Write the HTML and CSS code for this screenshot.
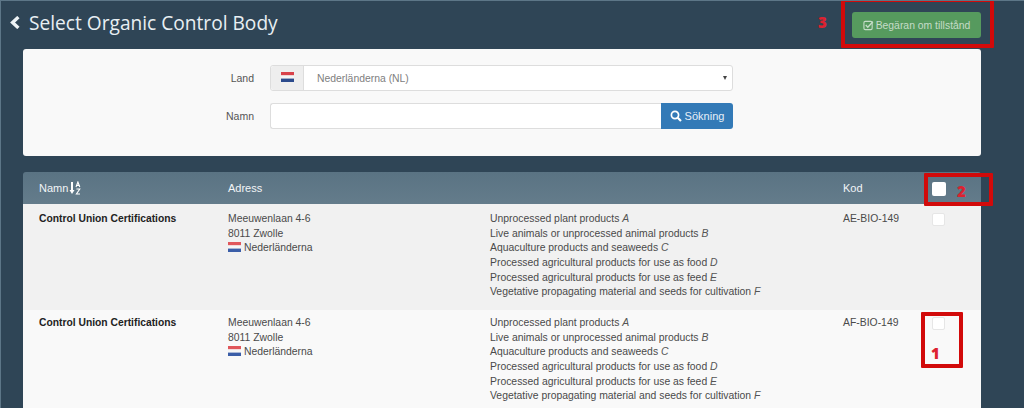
FILE: index.html
```html
<!DOCTYPE html>
<html lang="sv">
<head>
<meta charset="utf-8">
<title>Select Organic Control Body</title>
<link rel="stylesheet" href="styles.css">
</head>
<body>
<div class="page">
  <header class="topbar">
    <h1 class="title">
      <svg class="back" viewBox="0 0 10 13" width="10" height="13"><path d="M8.4 1.1 2.6 6.5l5.8 5.4" fill="none" stroke="#eef3f6" stroke-width="3.4"/></svg>
      Select Organic Control Body
    </h1>
    <button class="request" type="button">
      <svg viewBox="0 0 12 12" width="11" height="11"><rect x="1" y="1.5" width="9" height="9" rx="1.5" fill="none" stroke="currentColor" stroke-width="1.2"/><path d="M3 5.5 5.2 7.8 10.8 2" fill="none" stroke="currentColor" stroke-width="1.5"/></svg>
      Begäran om tillstånd
    </button>
  </header>

  <section class="filters">
    <div class="field">
      <span class="label">Land</span>
      <div class="select">
        <span class="addon">
          <svg class="flag" viewBox="0 0 13 10" width="13" height="10"><rect width="13" height="3.4" fill="#d8424a"/><rect y="3.4" width="13" height="3.2" fill="#f4f4f4"/><rect y="6.6" width="13" height="3.4" fill="#2b4a8c"/></svg>
        </span>
        <span class="value">Nederländerna (NL)</span>
        <span class="caret"></span>
      </div>
    </div>
    <div class="field">
      <span class="label">Namn</span>
      <div class="search">
        <input class="input" type="text" aria-label="Namn">
        <button class="search-btn" type="button">
          <svg viewBox="0 0 12 12" width="12" height="12"><circle cx="5" cy="5" r="3.6" fill="none" stroke="#fff" stroke-width="1.7"/><path d="M7.7 7.7 11 11" stroke="#fff" stroke-width="2.2"/></svg>
          Sökning
        </button>
      </div>
    </div>
  </section>

  <section class="table">
    <div class="row head">
      <div class="sort">Namn<svg viewBox="0 0 12 14" width="12" height="14"><path d="M3 1v9" stroke="#fff" stroke-width="2"/><path d="M.5 9h5L3 13z" fill="#fff"/><path d="M7 6 8.9 1 10.8 6M7.8 4.4h2.2M7.4 8h3.4L7.4 13h3.6" fill="none" stroke="#fff" stroke-width="1.1"/></svg></div>
      <div>Adress</div>
      <div></div>
      <div>Kod</div>
      <div><span class="check solid"></span></div>
    </div>
    <div class="row item shaded">
      <div class="name">Control Union Certifications</div>
      <div class="lines">Meeuwenlaan 4-6<br>8011 Zwolle<br><svg class="flag mini" viewBox="0 0 13 10" width="13" height="10"><rect width="13" height="3.4" fill="#e0575c"/><rect y="3.4" width="13" height="3.2" fill="#f6f6f6"/><rect y="6.6" width="13" height="3.4" fill="#3b5ea8"/></svg> Nederländerna</div>
      <div class="lines">Unprocessed plant products <i>A</i><br>Live animals or unprocessed animal products <i>B</i><br>Aquaculture products and seaweeds <i>C</i><br>Processed agricultural products for use as food <i>D</i><br>Processed agricultural products for use as feed <i>E</i><br>Vegetative propagating material and seeds for cultivation <i>F</i></div>
      <div class="lines">AE-BIO-149</div>
      <div><span class="check"></span></div>
    </div>
    <div class="row item plain">
      <div class="name">Control Union Certifications</div>
      <div class="lines">Meeuwenlaan 4-6<br>8011 Zwolle<br><svg class="flag mini" viewBox="0 0 13 10" width="13" height="10"><rect width="13" height="3.4" fill="#e0575c"/><rect y="3.4" width="13" height="3.2" fill="#f6f6f6"/><rect y="6.6" width="13" height="3.4" fill="#3b5ea8"/></svg> Nederländerna</div>
      <div class="lines">Unprocessed plant products <i>A</i><br>Live animals or unprocessed animal products <i>B</i><br>Aquaculture products and seaweeds <i>C</i><br>Processed agricultural products for use as food <i>D</i><br>Processed agricultural products for use as feed <i>E</i><br>Vegetative propagating material and seeds for cultivation <i>F</i></div>
      <div class="lines">AF-BIO-149</div>
      <div><span class="check"></span></div>
    </div>
  </section>

  <div class="mark mark-3"></div><span class="num num-3">3</span>
  <div class="mark mark-2"></div><span class="num num-2">2</span>
  <div class="mark mark-1"></div><span class="num num-1">1</span>
</div>
</body>
</html>
```
FILE: styles.css
```css
* { box-sizing: border-box; }
html, body { margin: 0; height: 408px; overflow: hidden; }
body { background: #2f4556; font-family: "Liberation Sans", Arial, sans-serif; color: #444; }
.page { position: relative; height: 408px; overflow: hidden; padding: 0 43px 0 22px; border-top: 1px solid #5d7687; border-left: 1px solid #5d7687; }
.topbar { height: 48px; display: flex; align-items: center; justify-content: space-between; margin-left: -13px; }
.title { margin: 0 0 5px; display: flex; align-items: center; gap: 9px; font: 400 19.15px "Open Sans", sans-serif; color: #e8eff3; }
.request { width: 129px; height: 26px; padding: 0; display: flex; align-items: center; justify-content: center; gap: 2px; border: 0; border-radius: 3px; background: #569a5e; color: #c5dcc8; font: 10.4px "Liberation Sans", Arial, sans-serif; }
.filters { height: 107px; background: #f9f9f9; border-radius: 3px; padding: 16px 248px 0 0; display: flex; flex-direction: column; gap: 12px; }
.field { display: flex; align-items: center; gap: 16px; height: 26px; }
.label { width: 231px; text-align: right; font-size: 10.5px; color: #555; }
.select, .search { flex: 1; height: 26px; display: flex; align-items: stretch; }
.select { background: #fff; border: 1px solid #ddd; border-radius: 3px; align-items: center; }
.addon { width: 33px; height: 24px; background: #eee; border-right: 1px solid #ddd; display: flex; align-items: center; justify-content: center; border-radius: 3px 0 0 3px; padding-bottom: 3px; }
.value { padding-left: 13px; font-size: 10.4px; color: #808080; flex: 1; }
.caret { width: 0; height: 0; border: 2.5px solid transparent; border-top: 4px solid #444; border-bottom: 0; margin-right: 5px; }
.input { flex: 1; min-width: 0; border: 1px solid #ddd; border-right: 0; border-radius: 3px 0 0 3px; background: #fff; }
.search-btn { width: 72px; display: flex; align-items: center; justify-content: center; gap: 3px; padding: 0; border: 0; border-radius: 0 3px 3px 0; background: #337ab7; color: #e6eff7; font: 11px "Liberation Sans", Arial, sans-serif; }
.table { margin-top: 16px; width: 958px; border-radius: 3px 3px 0 0; overflow: hidden; }
.row { display: grid; grid-template-columns: 205px 262px 353px 89px 49px; }
.row > div:first-child { padding-left: 16px; }
.head { height: 32px; align-items: center; background: linear-gradient(#5a7383, #647c8b); color: #f2f5f7; font-size: 11px; }
.sort { display: flex; align-items: center; gap: 1px; }
.item { height: 106px; padding-top: 8px; font-size: 10.4px; line-height: 14.67px; }
.shaded { background: #f1f1f1; }
.plain { background: #f9f9f9; padding-top: 6px; }
.name { font-weight: 700; font-size: 10.3px; color: #222; }
.lines { color: #4a4a4a; }
.lines i { color: #555; }
.flag.mini { vertical-align: -1px; }
.check { display: block; width: 13px; height: 13px; border-radius: 2px; background: #fff; border: 1px solid #e6e6e6; margin-top: 1px; }
.check.solid { width: 14px; height: 14px; border: 0; margin-top: 2px; }
.mark { position: absolute; border: 4px solid #d20a0a; border-radius: 1px; }
.mark-3 { left: 840px; top: -3px; width: 153px; height: 50px; }
.mark-2 { left: 923px; top: 172px; width: 69px; height: 33px; }
.mark-1 { left: 920px; top: 311px; width: 42px; height: 56px; }
.num { position: absolute; color: #dd2230; font: 800 15px "Open Sans", sans-serif; }
.num-3 { left: 817px; top: 11px; }
.num-2 { left: 956px; top: 180px; }
.num-1 { left: 930px; top: 342px; }
```
